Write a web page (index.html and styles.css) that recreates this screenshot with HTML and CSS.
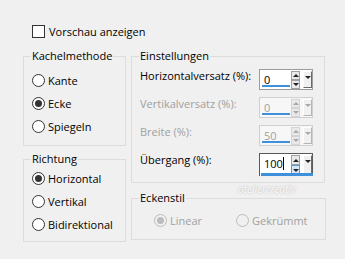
FILE: index.html
```html
<!DOCTYPE html>
<html lang="de">
<head>
    <meta charset="UTF-8">
    <title>Kacheln</title>
    <link rel="stylesheet" href="styles.css">
</head>
<body>
    <div class="dialog">
        <label class="preview">
            <span class="checkbox"></span>
            <span>Vorschau anzeigen</span>
        </label>

        <div class="columns">
            <div class="col-left">
                <fieldset class="group tiles">
                    <legend>Kachelmethode</legend>
                    <div class="option"><span class="radio"></span>Kante</div>
                    <div class="option"><span class="radio checked"></span>Ecke</div>
                    <div class="option"><span class="radio"></span>Spiegeln</div>
                </fieldset>

                <fieldset class="group direction">
                    <legend>Richtung</legend>
                    <div class="option"><span class="radio checked"></span>Horizontal</div>
                    <div class="option"><span class="radio"></span>Vertikal</div>
                    <div class="option"><span class="radio"></span>Bidirektional</div>
                </fieldset>
            </div>

            <div class="col-right">
                <fieldset class="group settings">
                    <legend>Einstellungen</legend>

                    <div class="field">
                        <span class="label">Horizontalversatz (%):</span>
                        <div class="spin">
                            <span class="value">0</span>
                            <span class="arrows"><span class="up"></span><span class="down"></span></span>
                            <span class="drop"></span>
                        </div>
                    </div>

                    <div class="field disabled">
                        <span class="label">Vertikalversatz (%):</span>
                        <div class="spin">
                            <span class="value">0</span>
                            <span class="arrows"><span class="up"></span><span class="down"></span></span>
                            <span class="drop"></span>
                        </div>
                    </div>

                    <div class="field disabled">
                        <span class="label">Breite (%):</span>
                        <div class="spin">
                            <span class="value">50</span>
                            <span class="arrows"><span class="up"></span><span class="down"></span></span>
                            <span class="drop"></span>
                        </div>
                    </div>

                    <div class="field focused">
                        <span class="label">Übergang (%):</span>
                        <div class="spin">
                            <span class="value">100<i class="caret"></i></span>
                            <span class="arrows"><span class="up"></span><span class="down"></span></span>
                            <span class="drop"></span>
                        </div>
                    </div>
                </fieldset>

                <fieldset class="group corners">
                    <legend>Eckenstil</legend>
                    <div class="corner-options">
                        <div class="option"><span class="radio checked"></span>Linear</div>
                        <div class="option"><span class="radio"></span>Gekrümmt</div>
                    </div>
                    <span class="stamp">ateliercreativ</span>
                </fieldset>
            </div>
        </div>
    </div>
</body>
</html>
```

FILE: styles.css
```css
body {
    margin: 0;
    background-color: #f0f0f0;
    font-family: "Open Sans", "Noto Sans", sans-serif;
    font-size: 11px;
    color: #000;
    overflow: hidden;
}

.dialog {
    padding: 25px 0 0 23px;
}

/* Vorschau */
.preview {
    display: flex;
    align-items: center;
    gap: 4px;
    height: 13px;
    margin-left: 9px;
}

.checkbox {
    width: 11px;
    height: 11px;
    border: 1px solid #333;
    background: #fff;
}

.columns {
    display: flex;
    gap: 5px;
    margin-top: 10px;
}

.col-left {
    display: flex;
    flex-direction: column;
    gap: 5px;
    width: 103px;
}

.col-right {
    display: flex;
    flex-direction: column;
    gap: 7px;
    width: 194px;
}

/* Gruppen */
.group {
    margin: 0;
    border: 1px solid #dcdcdc;
    padding: 5px 7px 7px 8px;
    position: relative;
}

.group legend {
    padding: 0 1px;
    margin-left: -1px;
    line-height: 16px;
}

.option {
    display: flex;
    align-items: center;
    gap: 3px;
    height: 23px;
}

.radio {
    width: 11px;
    height: 11px;
    border: 1px solid #333;
    border-radius: 50%;
    background: #fff;
    display: flex;
    align-items: center;
    justify-content: center;
}

.radio.checked::after {
    content: "";
    width: 7px;
    height: 7px;
    border-radius: 50%;
    background: #333;
}

.direction {
    padding-top: 0;
    padding-bottom: 5px;
}

/* Einstellungen */
.settings {
    display: flex;
    flex-direction: column;
    gap: 7px;
    padding-top: 5px;
    padding-bottom: 8px;
}

.field {
    display: flex;
    align-items: flex-start;
    height: 21px;
}

.field .label {
    width: 119px;
    line-height: 13px;
}

.spin {
    display: flex;
    width: 52px;
    height: 19px;
    border: 1px solid #9c9c9c;
    background: #fff;
    position: relative;
}

.spin .value {
    width: 28px;
    padding-left: 4px;
    line-height: 19px;
    position: relative;
}

.spin .value::after {
    content: "";
    position: absolute;
    left: 2px;
    right: 1px;
    bottom: 2px;
    height: 2px;
    background: #3e8fdc;
}

.arrows {
    display: flex;
    flex-direction: column;
    width: 10px;
    margin: 1px 1px 0 0;
}

.arrows span {
    height: 8px;
    border: 1px solid #a0a0a0;
    background: #e9e9e9;
    display: flex;
    align-items: center;
    justify-content: center;
}

.arrows .up::after {
    content: "";
    border: 3px solid transparent;
    border-top: 0;
    border-bottom: 3px solid #222;
}

.arrows .down::after {
    content: "";
    border: 3px solid transparent;
    border-bottom: 0;
    border-top: 3px solid #222;
}

.drop {
    width: 9px;
    margin: 1px 0 1px 2px;
    border: 1px solid;
    border-color: #fff #6a6a6a #6a6a6a #fff;
    background: #f0f0f0;
    display: flex;
    align-items: flex-start;
    justify-content: center;
    padding-top: 4px;
    box-sizing: border-box;
}

.drop::after {
    content: "";
    border: 3px solid transparent;
    border-bottom: 0;
    border-top: 3px solid #222;
}

.disabled .label,
.disabled .spin .value {
    color: #a0a0a0;
}

.disabled .spin {
    border-color: #cfcfcf;
    background: #f7f7f7;
}

.disabled .arrows span {
    border-color: #d4d4d4;
}

.disabled .arrows .up::after {
    border-bottom-color: #a8a8a8;
}

.disabled .arrows .down::after,
.disabled .drop::after {
    border-top-color: #a8a8a8;
}

.disabled .drop {
    border-color: #fff #b5b5b5 #b5b5b5 #fff;
}

.focused .spin {
    height: 22px;
    border-color: #5a5a5a;
    border-bottom: 0;
}

.focused .spin::after {
    content: "";
    position: absolute;
    left: 1px;
    right: -1px;
    bottom: 0;
    height: 3px;
    background: #3e8fdc;
}

.focused .spin .value::after {
    display: none;
}

.focused .arrows .down {
    background: #d6e8f8;
    border-color: #5b9bd5;
}

.caret {
    display: inline-block;
    width: 1px;
    height: 13px;
    background: #000;
    vertical-align: -2px;
}

/* Eckenstil */
.corners {
    padding: 3px 7px 7px 8px;
}

.corner-options {
    display: flex;
    margin-left: 14px;
}

.corners .option {
    width: 82px;
    color: #a0a0a0;
}

.corners .radio {
    border-color: #bcbcbc;
    background: #f0f0f0;
}

.corners .radio.checked::after {
    background: #bcbcbc;
}

.stamp {
    position: absolute;
    left: 106px;
    top: -24px;
    font-size: 10px;
    font-style: italic;
    color: #fff;
    text-shadow: 0 0 2px #9a9a9a;
    opacity: 0.8;
}
```
